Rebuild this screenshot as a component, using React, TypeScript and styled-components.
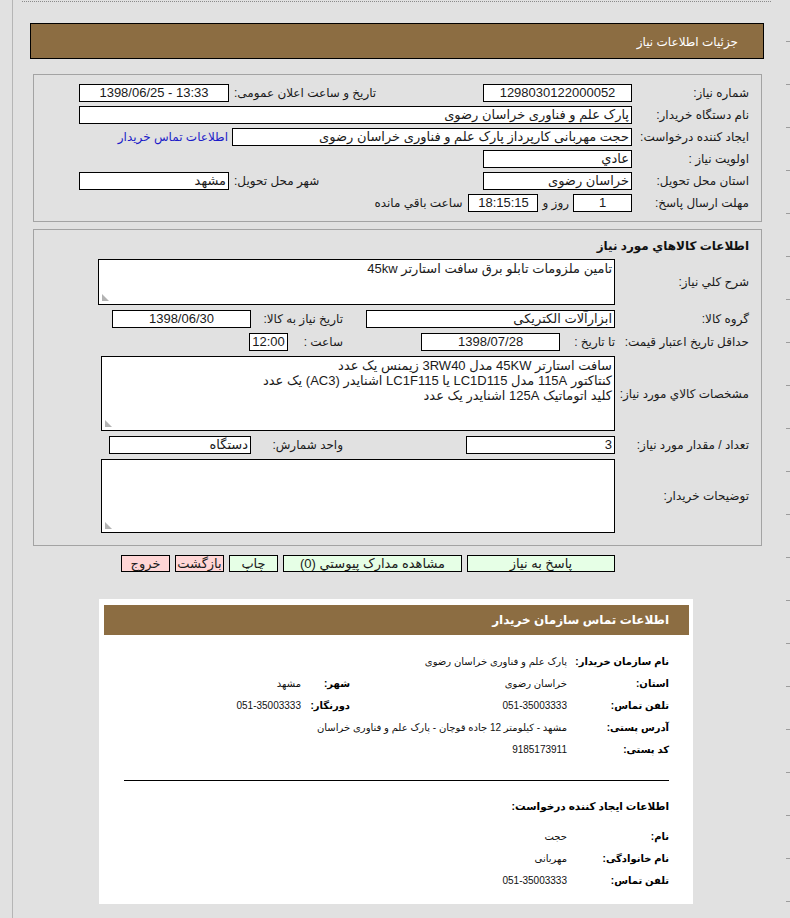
import React from 'react';
import styled, { createGlobalStyle } from 'styled-components';

const GlobalStyle = createGlobalStyle`
  html, body {
    margin: 0;
    padding: 0;
  }
  body {
    background: #e1e1e1;
    font-family: "Liberation Sans", "DejaVu Sans", sans-serif;
  }
`;

const Page = styled.div`
  min-height: 918px;
  display: flex;
  background-color: #e1e1e1;
  background-image: repeating-linear-gradient(
    to bottom,
    transparent 0,
    transparent 41px,
    #9c9c9c 41px,
    #9c9c9c 42px,
    transparent 42px,
    transparent 43px
  );
  background-size: 4px 100%;
  background-position: right top;
  background-repeat: no-repeat;
`;

const Frame = styled.div`
  flex: 1;
  margin-left: 12px;
  padding-top: 1px;
  border-left: 1px solid #b5b5b5;
`;

const TopRule = styled.div`
  margin: 0 19px 0 9px;
  border-top: 1px dotted #8a8a8a;
`;

const Main = styled.div`
  width: 734px;
  margin-left: 17px;
  direction: rtl;
  font-size: 12px;
  color: #1a1a1a;
`;

const Header = styled.div`
  margin-top: 21px;
  height: 34px;
  padding-right: 25px;
  border: 1px solid #000;
  background: #8c6d42;
  color: #fff;
  font-size: 12px;
  line-height: 36px;
`;

const Panel = styled.div<{ $top: number; $pad: string; $gap: number }>`
  margin: ${p => p.$top}px 2px 0 3px;
  padding: ${p => p.$pad};
  border: 1px solid #a3a3a3;
  display: flex;
  flex-direction: column;
  gap: ${p => p.$gap}px;
`;

const PanelTitle = styled.div`
  height: 16px;
  line-height: 16px;
  font-size: 12px;
  font-weight: bold;
  color: #111;
`;

const Row = styled.div`
  display: flex;
  align-items: center;
  min-height: 18px;
`;

const Label = styled.div<{ $w: number }>`
  flex: none;
  width: ${p => p.$w}px;
  white-space: nowrap;
`;

const SideLabel = styled.div<{ $w?: number }>`
  flex: none;
  ${p => (p.$w ? `width: ${p.$w}px;` : '')}
  margin-left: 5px;
  white-space: nowrap;
`;

const Inline = styled.div<{ $mx: string }>`
  flex: none;
  margin: 0 ${p => p.$mx};
  white-space: nowrap;
`;

const Spacer = styled.div`
  flex: 1;
`;

const SideGroup = styled.div<{ $left: number }>`
  display: flex;
  align-items: center;
  margin-left: ${p => p.$left}px;
`;

const Field = styled.div<{ $w?: number; $align?: 'center' | 'right'; $ltr?: boolean; $gapRight?: number }>`
  box-sizing: border-box;
  height: 18px;
  ${p => (p.$w ? `width: ${p.$w}px; flex: none;` : 'flex: 1;')}
  margin-right: ${p => p.$gapRight || 0}px;
  padding: 0 2px;
  border: 1px solid #000;
  background: #fff;
  font-size: 13px;
  line-height: 16px;
  text-align: ${p => p.$align || 'right'};
  direction: ${p => (p.$ltr ? 'ltr' : 'rtl')};
  white-space: nowrap;
  overflow: hidden;
`;

const TextBox = styled.div<{ $w: number; $h: number }>`
  position: relative;
  box-sizing: border-box;
  flex: none;
  width: ${p => p.$w}px;
  height: ${p => p.$h}px;
  padding: 1px 2px;
  border: 1px solid #000;
  background: #fff;
  font-size: 13px;
  line-height: 15px;
  white-space: pre-line;

  &::after {
    content: '';
    position: absolute;
    left: 3px;
    bottom: 3px;
    width: 7px;
    height: 7px;
    background-image: radial-gradient(circle, #b0b0b0 0.7px, transparent 0.9px);
    background-size: 2px 2px;
    clip-path: polygon(0 0, 0 100%, 100% 100%);
  }
`;

const Link = styled.div`
  margin-right: 4px;
  color: #1c1cc8;
  white-space: nowrap;
`;

const ButtonRow = styled.div`
  display: flex;
  gap: 5px;
  margin-top: 9px;
  padding-right: 149px;
`;

const Button = styled.div<{ $w: number; $tone: 'green' | 'pink' }>`
  box-sizing: border-box;
  width: ${p => p.$w}px;
  height: 17px;
  border: 1px solid #000;
  background: ${p => (p.$tone === 'green' ? '#e6ffe6' : '#ffd6d6')};
  font-size: 13px;
  line-height: 15px;
  text-align: center;
  white-space: nowrap;
`;

const Card = styled.div`
  box-sizing: border-box;
  width: 594px;
  margin: 27px 71px 0 0;
  padding: 6px 4px 13px 5px;
  background: #fff;
`;

const CardHeader = styled.div`
  height: 30px;
  padding-right: 20px;
  background: #8c6d42;
  color: #fff;
  font-size: 12px;
  font-weight: bold;
  line-height: 30px;
`;

const CardBody = styled.div`
  padding-right: 20px;
  font-size: 10px;
  color: #111;
`;

const InfoGrid = styled.div<{ $top: number }>`
  display: grid;
  grid-template-columns: 102px 217px 49px 1fr;
  grid-auto-rows: 22px;
  align-items: center;
  margin-top: ${p => p.$top}px;
`;

const InfoLabel = styled.div`
  font-size: 10px;
  font-weight: bold;
  color: #000;
  white-space: nowrap;
`;

const InfoValue = styled.div<{ $span?: number }>`
  grid-column: span ${p => p.$span || 1};
  white-space: nowrap;
`;

const Divider = styled.div`
  margin: 20px 0 0 20px;
  border-top: 1px solid #000;
`;

const SubTitle = styled.div`
  margin-top: 18px;
  height: 14px;
  line-height: 14px;
  font-size: 10.5px;
  font-weight: bold;
  color: #000;
`;

const specText = [
  'سافت استارتر 45KW مدل 3RW40 زیمنس یک عدد',
  'کنتاکتور 115A مدل LC1D115 یا LC1F115 اشنایدر (AC3) یک عدد',
  'کلید اتوماتیک 125A اشنایدر یک عدد',
].join('\n');

const App: React.FC = () => {
  return (
    <>
      <GlobalStyle />
      <Page>
        <Frame>
          <TopRule />
          <Main>
            <Header>جزئیات اطلاعات نیاز</Header>

            <Panel $top={15} $pad="9px 12px 9px 45px" $gap={4}>
              <Row>
                <Label $w={117}>شماره نیاز:</Label>
                <Field $w={149} $align="center">1298030122000052</Field>
                <Spacer />
                <SideLabel>تاریخ و ساعت اعلان عمومی:</SideLabel>
                <Field $w={150} $align="center" $ltr>1398/06/25 - 13:33</Field>
              </Row>
              <Row>
                <Label $w={117}>نام دستگاه خریدار:</Label>
                <Field>پارک علم و فناوری خراسان رضوی</Field>
              </Row>
              <Row>
                <Label $w={117}>ایجاد کننده درخواست:</Label>
                <Field $w={400}>حجت مهربانی کارپرداز پارک علم و فناوری خراسان رضوی</Field>
                <Link>اطلاعات تماس خریدار</Link>
                <Spacer />
              </Row>
              <Row>
                <Label $w={117}>اولویت نیاز :</Label>
                <Field $w={149}>عادي</Field>
              </Row>
              <Row>
                <Label $w={117}>استان محل تحویل:</Label>
                <Field $w={149}>خراسان رضوی</Field>
                <Spacer />
                <SideLabel>شهر محل تحویل:</SideLabel>
                <Field $w={150}>مشهد</Field>
              </Row>
              <Row>
                <Label $w={117}>مهلت ارسال پاسخ:</Label>
                <Field $w={59} $align="center">1</Field>
                <Inline $mx="4px">روز و</Inline>
                <Field $w={70} $align="center">18:15:15</Field>
                <Inline $mx="6px">ساعت باقي مانده</Inline>
              </Row>
            </Panel>

            <Panel $top={7} $pad="8px 12px 12px 0" $gap={5}>
              <PanelTitle>اطلاعات کالاهاي مورد نياز</PanelTitle>
              <Row>
                <Label $w={134}>شرح کلي نیاز:</Label>
                <TextBox $w={517} $h={46}>تامین ملزومات تابلو برق سافت استارتر 45kw</TextBox>
              </Row>
              <Row>
                <Label $w={134}>گروه کالا:</Label>
                <Field $w={249}>ابزارآلات الکتریکی</Field>
                <Spacer />
                <SideGroup $left={78}>
                  <SideLabel $w={87}>تاریخ نیاز به کالا:</SideLabel>
                  <Field $w={139} $align="center">1398/06/30</Field>
                </SideGroup>
              </Row>
              <Row>
                <Label $w={134}>حداقل تاریخ اعتبار قیمت:</Label>
                <Inline $mx="0">تا تاریخ :</Inline>
                <Field $w={139} $align="center" $gapRight={14}>1398/07/28</Field>
                <Spacer />
                <SideGroup $left={215}>
                  <SideLabel $w={50}>ساعت :</SideLabel>
                  <Field $w={39} $align="center">12:00</Field>
                </SideGroup>
              </Row>
              <Row>
                <Label $w={134}>مشخصات کالاي مورد نياز:</Label>
                <TextBox $w={514} $h={75}>{specText}</TextBox>
              </Row>
              <Row>
                <Label $w={134}>تعداد / مقدار مورد نیاز:</Label>
                <Field $w={149}>3</Field>
                <Spacer />
                <SideGroup $left={75}>
                  <SideLabel $w={87}>واحد شمارش:</SideLabel>
                  <Field $w={142}>دستگاه</Field>
                </SideGroup>
              </Row>
              <Row>
                <Label $w={134}>توضیحات خریدار:</Label>
                <TextBox $w={514} $h={74} />
              </Row>
            </Panel>

            <ButtonRow>
              <Button $w={148} $tone="green">پاسخ به نیاز</Button>
              <Button $w={179} $tone="green">مشاهده مدارک پیوستي (0)</Button>
              <Button $w={49} $tone="green">چاپ</Button>
              <Button $w={49} $tone="pink">بازگشت</Button>
              <Button $w={49} $tone="pink">خروج</Button>
            </ButtonRow>

            <Card>
              <CardHeader>اطلاعات تماس سازمان خریدار</CardHeader>
              <CardBody>
                <InfoGrid $top={15}>
                  <InfoLabel>نام سازمان خریدار:</InfoLabel>
                  <InfoValue $span={3}>پارک علم و فناوری خراسان رضوی</InfoValue>

                  <InfoLabel>استان:</InfoLabel>
                  <InfoValue>خراسان رضوی</InfoValue>
                  <InfoLabel>شهر:</InfoLabel>
                  <InfoValue>مشهد</InfoValue>

                  <InfoLabel>تلفن تماس:</InfoLabel>
                  <InfoValue>051-35003333</InfoValue>
                  <InfoLabel>دورنگار:</InfoLabel>
                  <InfoValue>051-35003333</InfoValue>

                  <InfoLabel>آدرس پستی:</InfoLabel>
                  <InfoValue $span={3}>مشهد - کیلومتر 12 جاده قوچان - پارک علم و فناوری خراسان</InfoValue>

                  <InfoLabel>کد پستی:</InfoLabel>
                  <InfoValue $span={3}>9185173911</InfoValue>
                </InfoGrid>

                <Divider />
                <SubTitle>اطلاعات ایجاد کننده درخواست:</SubTitle>

                <InfoGrid $top={12}>
                  <InfoLabel>نام:</InfoLabel>
                  <InfoValue $span={3}>حجت</InfoValue>

                  <InfoLabel>نام خانوادگی:</InfoLabel>
                  <InfoValue $span={3}>مهربانی</InfoValue>

                  <InfoLabel>تلفن تماس:</InfoLabel>
                  <InfoValue $span={3}>051-35003333</InfoValue>
                </InfoGrid>
              </CardBody>
            </Card>
          </Main>
        </Frame>
      </Page>
    </>
  );
};

export default App;
